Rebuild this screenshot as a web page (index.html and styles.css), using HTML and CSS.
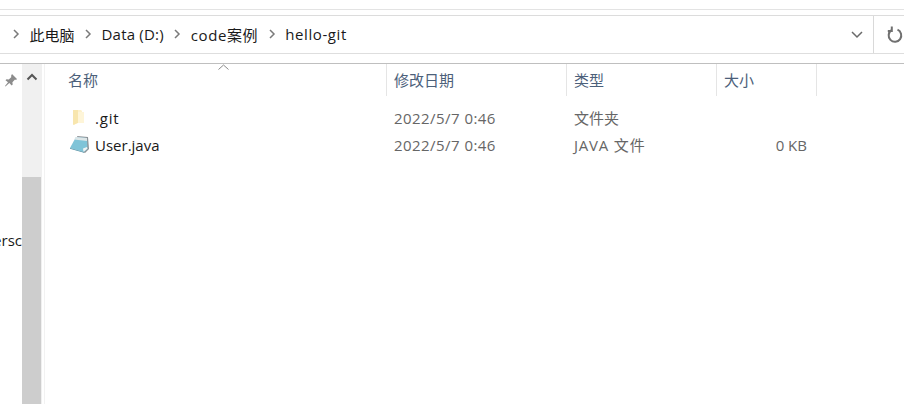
FILE: index.html
```html
<!DOCTYPE html>
<html lang="zh-CN">

<head>
  <meta charset="UTF-8">
  <meta name="viewport" content="width=device-width, initial-scale=1.0">
  <title>hello-git</title>
  <link rel="stylesheet" href="styles.css">
</head>

<body>
  <div class="top-strip"></div>

  <div class="address-row">
    <div class="breadcrumb">
      <svg class="crumb-arrow" width="8" height="12" viewBox="0 0 8 12"><path d="M2 2l4 4-4 4" /></svg>
      <span class="crumb">此电脑</span>
      <svg class="crumb-arrow" width="8" height="12" viewBox="0 0 8 12"><path d="M2 2l4 4-4 4" /></svg>
      <span class="crumb drive">Data (D:)</span>
      <svg class="crumb-arrow" width="8" height="12" viewBox="0 0 8 12"><path d="M2 2l4 4-4 4" /></svg>
      <span class="crumb wide">code案例</span>
      <svg class="crumb-arrow" width="8" height="12" viewBox="0 0 8 12"><path d="M2 2l4 4-4 4" /></svg>
      <span class="crumb wide">hello-git</span>
    </div>
    <div class="dropdown">
      <svg width="14" height="10" viewBox="0 0 14 10"><path d="M2 2l5 5 5-5" /></svg>
    </div>
    <div class="refresh">
      <svg width="16" height="18" viewBox="0 0 16 18">
        <path d="M4.500 4.200A6.300 6.300 0 1 0 10.500 3.700" />
        <path d="M4.800 .5V5H.8" />
      </svg>
    </div>
  </div>

  <div class="main">
    <aside class="sidebar">
      <div class="nav-pane">
        <svg class="pin" width="16" height="16" viewBox="0 0 16 16">
          <path d="M9 2l5 5-1 1-1-.4-2.600 2.600.3 2.300-1 1-2.400-2.400L2.500 14.500 2 14l3-3.700L2.500 8.300l1-1 2.300.3L8.400 5 8 4z" />
        </svg>
        <span class="nav-text">ersc</span>
      </div>
      <div class="scrollbar">
        <div class="scroll-up">
          <svg width="12" height="8" viewBox="0 0 12 8"><path d="M1.500 6.500L6 2l4.500 4.500" /></svg>
        </div>
        <div class="scroll-thumb"></div>
      </div>
    </aside>

    <section class="files">
      <div class="sort-arrow">
        <svg width="11" height="6" viewBox="0 0 11 6"><path d="M.5 5.500L5.500 1l5 4.500" /></svg>
      </div>
      <div class="head-row">
        <div class="col-name head">名称</div>
        <div class="col-date head">修改日期</div>
        <div class="col-type head">类型</div>
        <div class="col-size head">大小</div>
      </div>

      <div class="file-list">
        <div class="file-row">
          <div class="col-name">
            <svg class="file-icon" width="22" height="20" viewBox="0 0 22 20">
              <path d="M6 2h7l1 1v12H9l-3 2z" fill="#fdf1cb" />
              <path d="M5 2h5v13l-5 2z" fill="#f8e6ae" />
              <path d="M10 4h6v11h-6z" fill="#fef5d8" />
            </svg>
            <span class="git-name">.git</span>
          </div>
          <div class="col-date">2022/5/7 0:46</div>
          <div class="col-type">文件夹</div>
          <div class="col-size"></div>
        </div>
        <div class="file-row">
          <div class="col-name">
            <svg class="file-icon" width="22" height="20" viewBox="0 0 22 20">
              <path d="M9 1l11 1 1 12-4 4-2-1z" fill="#8d9296" />
              <path d="M8 2l11 1 .5 11-3.500 3L2 13z" fill="#7fc4d8" />
              <path d="M8 2l11 1v3L6 4.500z" fill="#dce6e8" />
              <path d="M15.500 17l4-3.500-.5-1.500-4 1.500z" fill="#f0f3f3" />
              <path d="M2 13l14 4v.8L2 13.800z" fill="#4f8ea3" />
            </svg>
            <span>User.java</span>
          </div>
          <div class="col-date">2022/5/7 0:46</div>
          <div class="col-type java-type">JAVA 文件</div>
          <div class="col-size">0 KB</div>
        </div>
      </div>
    </section>
  </div>
</body>

</html>
```
FILE: styles.css
```css
* {
  margin: 0;
  padding: 0;
  box-sizing: border-box;
}

html,
body {
  height: 100%;
  overflow: hidden;
}

body {
  display: flex;
  flex-direction: column;
  background: #fff;
  font-family: "Open Sans", "Noto Sans CJK SC", sans-serif;
  font-size: 15px;
  color: #1a1a1a;
}

svg {
  display: block;
  fill: none;
}

.top-strip {
  height: 7px;
  margin-top: 9px;
  border-top: 1px solid #e3e3e3;
  border-bottom: 1px solid #dcdcdc;
}

.address-row {
  display: flex;
  height: 38px;
  border-bottom: 1px solid #dedede;
}

.breadcrumb {
  flex: 1;
  display: flex;
  align-items: center;
  padding-left: 12px;
  padding-bottom: 1px;
}

.crumb-arrow {
  stroke: #7a7a7a;
  stroke-width: 1.500;
}

.crumb {
  margin: 0 9.500px;
}

.crumb.drive {
  letter-spacing: .2px;
}

.crumb.wide {
  letter-spacing: .6px;
}

.dropdown {
  width: 34px;
  display: flex;
  align-items: center;
  justify-content: center;
  margin-left: auto;
  border-right: 1px solid #d9d9d9;
}

.dropdown svg {
  stroke: #6a6a6a;
  stroke-width: 1.500;
}

.refresh {
  width: 30px;
  display: flex;
  align-items: center;
  padding-left: 13px;
}

.refresh svg {
  stroke: #707070;
  stroke-width: 2;
}

.main {
  flex: 1;
  display: flex;
  margin-top: 9px;
  border-top: 1px solid #bfbfbf;
  min-height: 0;
}

.sidebar {
  width: 45px;
  display: flex;
  border-right: 1px solid #f2f2f2;
}

.nav-pane {
  width: 22px;
  overflow: hidden;
  position: relative;
}

.pin {
  margin: 8px 0 0 3px;
  fill: #8c8c8c;
}

.nav-text {
  position: absolute;
  right: 0;
  top: 166px;
}

.scrollbar {
  width: 20px;
  background: #f0f0f0;
}

.scroll-up {
  height: 17px;
  display: flex;
  align-items: flex-end;
  justify-content: center;
}

.scroll-up svg {
  stroke: #555;
  stroke-width: 2;
}

.scroll-thumb {
  margin-top: 96px;
  height: 240px;
  width: 19px;
  background: #cdcdcd;
}

.files {
  flex: 1;
  position: relative;
}

.sort-arrow {
  position: absolute;
  left: 173px;
  top: 0;
}

.sort-arrow svg {
  stroke: #8a8a8a;
}

.head-row,
.file-row {
  display: flex;
}

.head-row {
  height: 32px;
}

.col-name {
  width: 342px;
  padding-left: 23px;
  display: flex;
  align-items: center;
}

.col-date {
  width: 180px;
  padding-left: 7px;
}

.col-type {
  width: 150px;
  padding-left: 7px;
}

.col-size {
  width: 100px;
  padding-right: 10px;
  text-align: right;
}

.head {
  display: flex;
  align-items: center;
  padding-bottom: 1px;
  border-right: 1px solid #e5e5e5;
  color: #4c607a;
}

.col-size.head {
  justify-content: flex-start;
  padding-left: 7px;
}

.file-list {
  padding-top: 8px;
}

.file-row {
  height: 27px;
  align-items: center;
}

.file-row .col-date,
.file-row .col-type,
.file-row .col-size {
  color: #666;
}

.file-row .col-date {
  letter-spacing: .45px;
}

.file-row .java-type {
  letter-spacing: .8px;
}

.git-name {
  letter-spacing: .8px;
}

.file-icon {
  margin-right: 5px;
  flex-shrink: 0;
}
```
